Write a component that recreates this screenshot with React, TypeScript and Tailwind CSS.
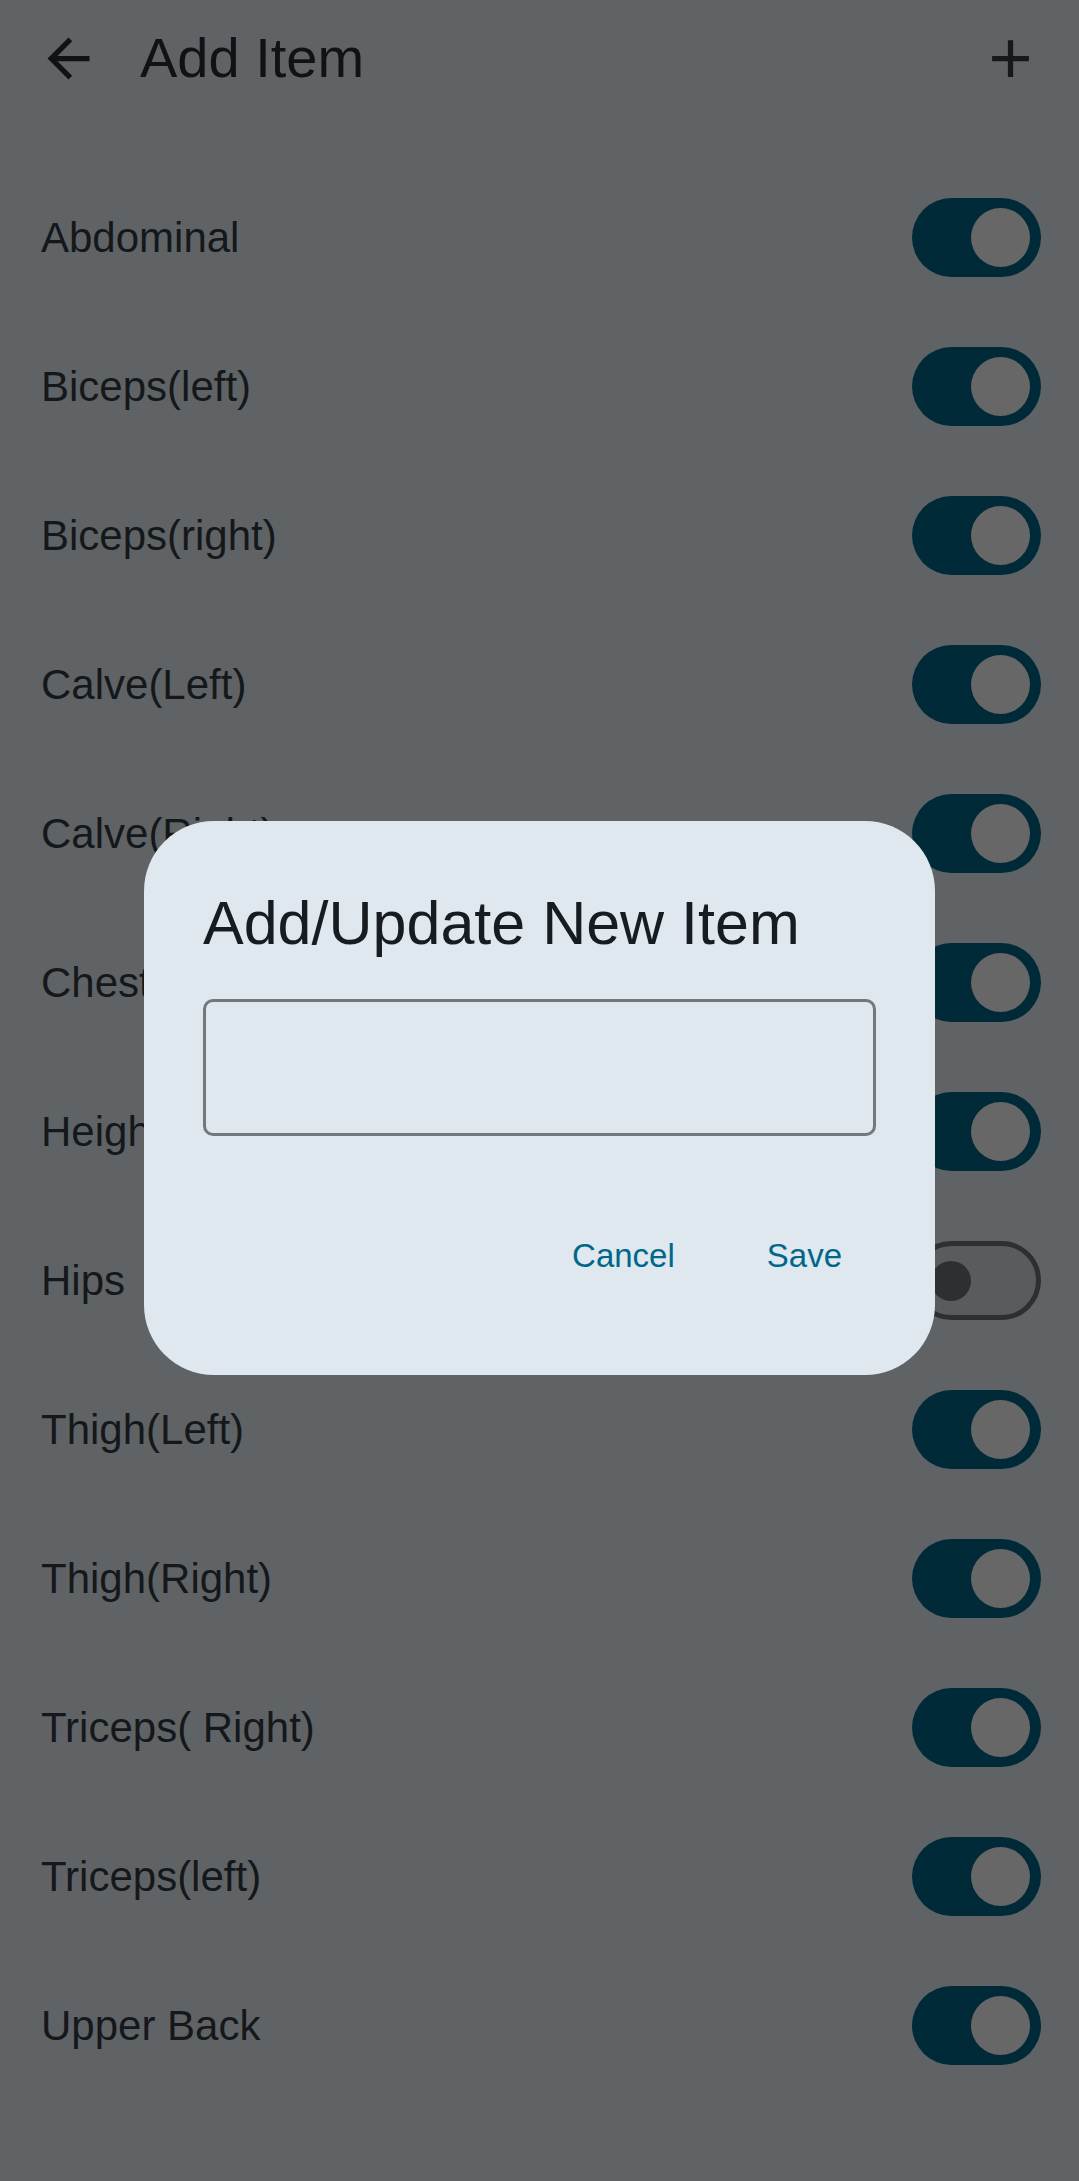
const items: { label: string; on: boolean }[] = [
  { label: "Abdominal", on: true },
  { label: "Biceps(left)", on: true },
  { label: "Biceps(right)", on: true },
  { label: "Calve(Left)", on: true },
  { label: "Calve(Right)", on: true },
  { label: "Chest", on: true },
  { label: "Height", on: true },
  { label: "Hips", on: false },
  { label: "Thigh(Left)", on: true },
  { label: "Thigh(Right)", on: true },
  { label: "Triceps( Right)", on: true },
  { label: "Triceps(left)", on: true },
  { label: "Upper Back", on: true },
];

function Toggle({ on }: { on: boolean }) {
  if (on) {
    return (
      <div className="flex h-[79px] w-[129px] items-center justify-end rounded-full bg-[#002a38] pr-[11px]">
        <div className="size-[59px] rounded-full bg-[#676767]" />
      </div>
    );
  }
  return (
    <div className="flex h-[79px] w-[129px] items-center rounded-full border-[5px] border-[#2c3032] bg-[#585c5f] pl-[14px]">
      <div className="size-[40px] rounded-full bg-[#2c3032]" />
    </div>
  );
}

export default function App() {
  return (
    <div
      className="relative h-[2181px] w-full overflow-hidden bg-[#5f6366]"
      style={{ fontFamily: '"Liberation Sans", Arial, sans-serif' }}
    >
      {/* top bar */}
      <div className="flex h-[116px] items-center pl-[37px] pr-[37px]">
        <svg className="size-[63px] text-[#101315]" viewBox="0 0 24 24" fill="currentColor">
          <path d="M20 11H7.83l5.59-5.59L12 4l-8 8 8 8 1.41-1.41L7.83 13H20v-2z" />
        </svg>
        <h1 className="ml-[40px] flex-1 text-[56px] leading-none text-[#101315]">Add Item</h1>
        <svg className="size-[63px] text-[#16191b]" viewBox="0 0 24 24" fill="currentColor">
          <path d="M19 13h-6v6h-2v-6H5v-2h6V5h2v6h6v2z" />
        </svg>
      </div>

      {/* list */}
      <div className="pt-[47px]">
        {items.map((item) => (
          <div key={item.label} className="flex h-[149px] items-center justify-between pl-[41px] pr-[38px]">
            <span className="text-[42px] text-[#15181a]">{item.label}</span>
            <Toggle on={item.on} />
          </div>
        ))}
      </div>

      {/* dialog */}
      <div className="absolute inset-0 flex items-center justify-center pt-[14px]">
        <div className="w-[791px] rounded-[70px] bg-[#dfe7ef] px-[59px] pb-[66px] pt-[60px]">
          <h2 className="text-[61px] leading-[84px] text-[#171c20]">Add/Update New Item</h2>
          <div className="mt-[34px] h-[137px] rounded-[10px] border-[3px] border-[#72787c]" />
          <div className="mt-[68px] flex justify-end gap-[24px]">
            <button className="h-[105px] px-[34px] text-[33px] text-[#00678a]">Cancel</button>
            <button className="h-[105px] px-[34px] text-[33px] text-[#00678a]">Save</button>
          </div>
        </div>
      </div>
    </div>
  );
}
